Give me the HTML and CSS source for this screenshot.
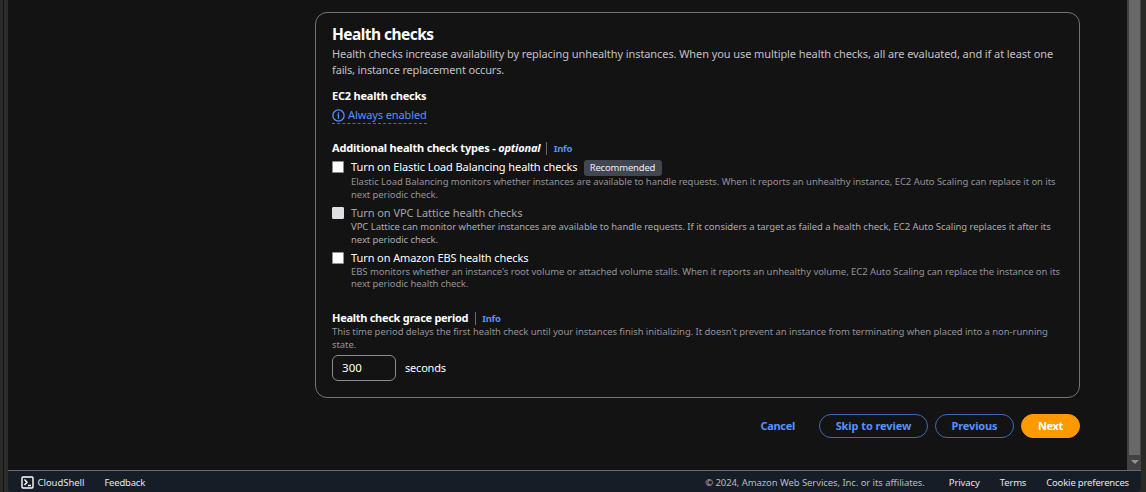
FILE: index.html
```
<!DOCTYPE html>
<html lang="en">
<head>
<meta charset="utf-8">
<title>Health checks</title>
<link rel="stylesheet" href="styles.css">
</head>
<body>
<div class="window">
  <div class="edge edge-left"></div>
  <div class="page">
    <div class="viewport">
      <main class="content">
        <section class="card">
          <h1 class="title"><span class="t-title">Health checks</span></h1>
          <p class="desc"><span class="t-desc1">Health checks increase availability by replacing unhealthy instances. When you use multiple health checks, all are evaluated, and if at least one</span><br><span class="t-desc2">fails, instance replacement occurs.</span></p>
          <h2 class="label label-ec2"><span class="t-ec2">EC2 health checks</span></h2>
          <a class="status"><svg class="info-icon" viewBox="0 0 13 13"><circle cx="6.5" cy="6.5" r="5.6"/><path d="M5.4 6H6.5V9.7M6.5 3.3V4.7"/></svg><span class="t-always">Always enabled</span></a>
          <div class="label-row label-additional"><h2 class="label"><span class="t-add">Additional health check types - <i>optional</i></span></h2><a class="info"><span class="t-info">Info</span></a></div>
          <div class="option">
            <span class="box"></span>
            <div class="option-head"><span class="t-o1">Turn on Elastic Load Balancing health checks</span><span class="badge"><span class="t-badge">Recommended</span></span></div>
            <p class="hint"><span class="t-hint">Elastic Load Balancing monitors whether instances are available to handle requests. When it reports an unhealthy instance, EC2 Auto Scaling can replace it on its</span><br><span class="t-hint-end">next periodic check.</span></p>
          </div>
          <div class="option option-disabled">
            <span class="box"></span>
            <div class="option-head"><span class="t-o2">Turn on VPC Lattice health checks</span></div>
            <p class="hint"><span class="t-hint-vpc">VPC Lattice can monitor whether instances are available to handle requests. If it considers a target as failed a health check, EC2 Auto Scaling replaces it after its</span><br><span class="t-hint-end">next periodic check.</span></p>
          </div>
          <div class="option option-last">
            <span class="box"></span>
            <div class="option-head"><span class="t-o1">Turn on Amazon EBS health checks</span></div>
            <p class="hint"><span class="t-hint">EBS monitors whether an instance's root volume or attached volume stalls. When it reports an unhealthy volume, EC2 Auto Scaling can replace the instance on its</span><br><span class="t-hint-end">next periodic health check.</span></p>
          </div>
          <div class="label-row"><h2 class="label"><span class="t-grace">Health check grace period</span></h2><a class="info info-grace"><span class="t-info">Info</span></a></div>
          <p class="hint hint-grace"><span class="t-hint">This time period delays the first health check until your instances finish initializing. It doesn't prevent an instance from terminating when placed into a non-running</span><br><span class="t-hint-end">state.</span></p>
          <div class="field"><div class="input"><span class="t-value">300</span></div><span class="t-sec">seconds</span></div>
        </section>
        <div class="actions">
          <a class="cancel"><span class="t-cancel">Cancel</span></a>
          <a class="btn btn-skip"><span class="t-skip">Skip to review</span></a>
          <a class="btn btn-prev"><span class="t-prev">Previous</span></a>
          <a class="btn btn-next"><span class="t-next">Next</span></a>
        </div>
      </main>
      <div class="scrollbar"><div class="thumb"></div><div class="arrow"></div></div>
    </div>
    <footer class="footer">
      <svg class="shell-icon" viewBox="0 0 13 13"><rect x="1" y="1" width="11" height="11" rx="1"/><path d="M3.5 3.5L6 6.2 3.5 9M7 9.5h3"/></svg>
      <span class="t-cloud">CloudShell</span>
      <span class="feedback"><span class="t-feed">Feedback</span></span>
      <span class="copy"><span class="t-copy">© 2024, Amazon Web Services, Inc. or its affiliates.</span></span>
      <span class="privacy"><span class="t-priv">Privacy</span></span>
      <span class="terms"><span class="t-terms">Terms</span></span>
      <span class="cookies"><span class="t-cook">Cookie preferences</span></span>
    </footer>
  </div>
  <div class="edge edge-right"></div>
</div>
</body>
</html>
```
FILE: styles.css
```
* { box-sizing: border-box; margin: 0; padding: 0; }
body { background: #131313; color: #fff; font: 11px/16px "Noto Sans", sans-serif; overflow: hidden; }
.window { display: flex; width: 1146px; height: 492px; background: #131313; white-space: nowrap; }
.edge { flex: none; }
.edge-left { width: 8px; background: linear-gradient(90deg, #2c2c2a 3px, #111 3px, #111 4px, #2c2c2a 4px); }
.edge-right { width: 5px; background: #292926; }
.page { flex: 1; min-width: 0; display: flex; flex-direction: column; background: #292926; }
.viewport { flex: 1; display: flex; background: #131313; }
.content { flex: 1; min-width: 0; padding: 12px 47px 0 307px; }
.card { height: 386px; border: 1px solid #747474; border-radius: 12px; padding: 11px 16px 0; }
.title { font-size: 15.5px; line-height: 20px; }
.desc { margin-top: 2px; color: #c0c0c6; }
.label { font-size: 11px; font-weight: 700; }
.label-ec2 { margin-top: 10px; }
.status { display: flex; width: 95px; height: 17px; margin-top: 3px; align-items: center; gap: 3px; color: #5691ff; border-bottom: 1px dashed #656871; }
.info-icon { flex: none; width: 13px; height: 13px; fill: none; stroke: currentColor; stroke-width: 1.3; }
.label-row { display: flex; align-items: center; }
.label-additional { margin: 16px 0 3px; }
.info { height: 13px; margin-left: 6px; padding-left: 6.5px; border-left: 1px solid #656871; color: #5691ff; font-size: 9.5px; line-height: 13px; font-weight: 700; }
.info-grace { margin-left: 7px; padding-left: 6px; }
.option { display: grid; grid-template-columns: 12px 1fr; column-gap: 7px; margin-bottom: 4px; }
.option-head { display: flex; align-items: center; height: 16px; }
.box { width: 12px; height: 12px; margin-top: 2px; background: #fff; border: 1px solid #8c8c94; border-radius: 1px; }
.option-disabled { color: #a4a4ad; }
.option-disabled .box { background: #dedee3; border-color: #dedee3; }
.hint { grid-column: 2; font-size: 9.5px; line-height: 13px; color: #92929a; }
.option-disabled .hint, .hint-grace { margin-top: -1px; }
.option-disabled .hint { color: #aaaab2; }
.option-last { margin-bottom: 20px; }
.option-last .hint { line-height: 12px; }
.badge { width: 78px; margin: 1px 0 0 6px; height: 16px; border-radius: 3px; background: #424650; color: #ebebf0; font-size: 9.5px; text-align: center; }
.field { display: flex; align-items: center; gap: 9px; margin-top: 4px; }
.input { width: 64px; height: 26px; padding: 4px 9px; border: 1px solid #8c8c94; border-radius: 6px; }
.actions { display: flex; justify-content: flex-end; margin-top: 16px; font-weight: 700; line-height: 22px; color: #5691ff; text-align: center; }
.cancel { padding: 1px 0; margin-right: 24px; }
.btn { height: 24px; border: 1px solid #4169b5; border-radius: 12px; }
.btn-skip { width: 109px; }
.btn-prev { width: 79px; margin: 0 7px; }
.btn-next { width: 59px; background: #f90; border-color: #f90; color: #fff; }
.scrollbar { flex: none; width: 14px; height: 470px; padding: 0 1px 0 2px; background: #424242; }
.thumb { height: 455px; background: #686868; }
.arrow { margin: 5px auto 0; width: 8px; border: 4px solid transparent; border-top-color: #929292; border-bottom: 0; }
.footer { display: flex; align-items: center; height: 22px; padding: 2px 12px 0 13px; border-top: 1px solid #656871; border-radius: 0 0 5px 5px; background: #161d26; font-size: 9.5px; color: #e4e4ea; }
.shell-icon { width: 13px; height: 13px; margin-right: 3.5px; fill: none; stroke: #fff; stroke-width: 1.4; }
.feedback { margin-left: 20px; }
.copy { margin-left: auto; color: #b9b9c0; }
.privacy { margin-left: 24px; }
.terms, .cookies { margin-left: 20px; }

/* Tracking */
.t-title { letter-spacing: -.54px; }
.t-desc1 { letter-spacing: -.084px; }
.t-desc2 { letter-spacing: -.157px; }
.t-ec2 { letter-spacing: -.22px; }
.t-always { letter-spacing: -.1px; }
.t-add { letter-spacing: -.185px; }
.t-info { letter-spacing: -.3px; }
.t-o1 { letter-spacing: -.09px; }
.t-o2 { letter-spacing: -.06px; }
.t-badge { letter-spacing: -.19px; }
.t-hint { letter-spacing: -.06px; }
.t-hint-vpc { letter-spacing: -.05px; }
.t-hint-end { letter-spacing: -.082px; }
.t-grace { letter-spacing: -.28px; }
.t-value { font-size: 11.5px; letter-spacing: .05px; }
.t-sec { letter-spacing: -.2px; }
.t-cancel { letter-spacing: -.3px; }
.t-skip { letter-spacing: -.08px; }
.t-prev { letter-spacing: -.15px; }
.t-next { letter-spacing: -.35px; }
.t-cloud { letter-spacing: -.04px; }
.t-feed { letter-spacing: -.2px; }
.t-copy { letter-spacing: -.08px; }
.t-priv { letter-spacing: -.08px; }
.t-terms { letter-spacing: -.2px; }
.t-cook { letter-spacing: -.17px; }
```
